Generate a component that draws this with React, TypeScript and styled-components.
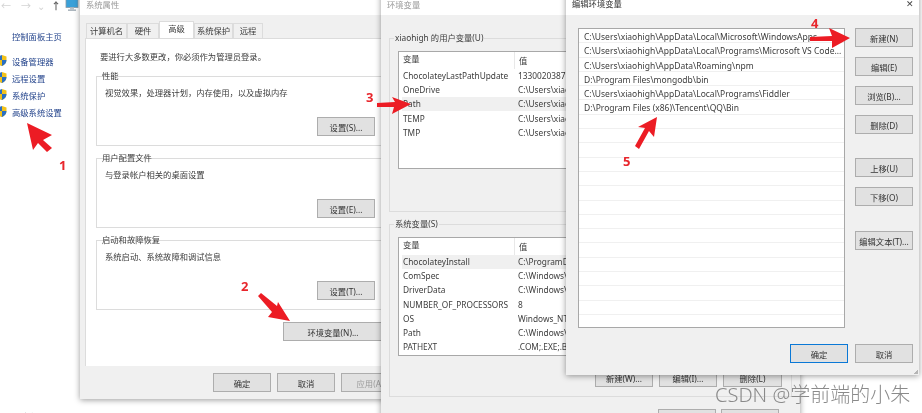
import React from 'react'
import styled, { createGlobalStyle } from 'styled-components'

const userVars = [
  ['ChocolateyLastPathUpdate', '133002038712'],
  ['OneDrive', 'C:\\Users\\xiaohigh\\OneDrive'],
  ['Path', 'C:\\Users\\xiaohigh\\AppData'],
  ['TEMP', 'C:\\Users\\xiaohigh\\AppData'],
  ['TMP', 'C:\\Users\\xiaohigh\\AppData'],
]

const systemVars = [
  ['ChocolateyInstall', 'C:\\ProgramData\\chocolatey'],
  ['ComSpec', 'C:\\Windows\\system32'],
  ['DriverData', 'C:\\Windows\\System32'],
  ['NUMBER_OF_PROCESSORS', '8'],
  ['OS', 'Windows_NT'],
  ['Path', 'C:\\Windows\\system32'],
  ['PATHEXT', '.COM;.EXE;.BAT;.CMD'],
]

const pathRows = [
  'C:\\Users\\xiaohigh\\AppData\\Local\\Microsoft\\WindowsApps',
  'C:\\Users\\xiaohigh\\AppData\\Local\\Programs\\Microsoft VS Code...',
  'C:\\Users\\xiaohigh\\AppData\\Roaming\\npm',
  'D:\\Program Files\\mongodb\\bin',
  'C:\\Users\\xiaohigh\\AppData\\Local\\Programs\\Fiddler',
  'D:\\Program Files (x86)\\Tencent\\QQ\\Bin',
  '', '', '', '', '', '', '', '', '', '', '', '', '', '', '',
]

const App = () => (
  <Desktop>
    <GlobalStyle />
    <Sidebar>
      <NavBar>
        <NavGlyph $faint $gap={0}>←</NavGlyph>
        <NavGlyph $faint $gap={10}>→</NavGlyph>
        <NavGlyph $faint $gap={5}>⌄</NavGlyph>
        <NavGlyph $gap={5}>↑</NavGlyph>
      </NavBar>
      <SideHome>控制面板主页</SideHome>
      {['设备管理器', '远程设置', '系统保护', '高级系统设置'].map(item => (
        <SideLink key={item}>
          <Shield />
          {item}
        </SideLink>
      ))}
      <SideFooter>另请参阅</SideFooter>
    </Sidebar>
    <MonitorIcon />

    <SystemWindow>
      <TitleBar>系统属性</TitleBar>
      <Tabs>
        <Tab $width={41}>计算机名</Tab>
        <Tab $width={32}>硬件</Tab>
        <Tab $width={35} $active>高级</Tab>
        <Tab $width={39}>系统保护</Tab>
        <Tab $width={30}>远程</Tab>
      </Tabs>
      <TabPage>
        <Notice>要进行大多数更改，你必须作为管理员登录。</Notice>
        <Group $height={70}>
          <GroupLabel>性能</GroupLabel>
          <GroupText>视觉效果，处理器计划，内存使用，以及虚拟内存</GroupText>
          <Button $width={58}>设置(S)...</Button>
        </Group>
        <Group $height={70}>
          <GroupLabel>用户配置文件</GroupLabel>
          <GroupText>与登录帐户相关的桌面设置</GroupText>
          <Button $width={58}>设置(E)...</Button>
        </Group>
        <Group $height={70}>
          <GroupLabel>启动和故障恢复</GroupLabel>
          <GroupText>系统启动、系统故障和调试信息</GroupText>
          <Button $width={58}>设置(T)...</Button>
        </Group>
        <EnvRow>
          <Button $width={100}>环境变量(N)...</Button>
        </EnvRow>
      </TabPage>
      <DialogButtons>
        <Button $width={58}>确定</Button>
        <Button $width={58}>取消</Button>
        <Button $width={58} $disabled>应用(A)</Button>
      </DialogButtons>
    </SystemWindow>

    <EnvWindow>
      <TitleBar>环境变量</TitleBar>
      <EnvBody>
        <EnvGroup $height={174}>
          <GroupLabel>xiaohigh 的用户变量(U)</GroupLabel>
          <VarList $height={118}>
            <VarHeader>
              <NameHead>变量</NameHead>
              <span>值</span>
            </VarHeader>
            {userVars.map(([name, value]) => (
              <VarRow key={name} $selected={name === 'Path'}>
                <VarName>{name}</VarName>
                <span>{value}</span>
              </VarRow>
            ))}
          </VarList>
        </EnvGroup>
        <EnvGroup $height={173}>
          <GroupLabel>系统变量(S)</GroupLabel>
          <VarList $height={119}>
            <VarHeader>
              <NameHead>变量</NameHead>
              <span>值</span>
            </VarHeader>
            {systemVars.map(([name, value]) => (
              <VarRow key={name} $selected={name === 'ChocolateyInstall'}>
                <VarName>{name}</VarName>
                <span>{value}</span>
              </VarRow>
            ))}
          </VarList>
          <VarButtons>
            <Button $width={58}>新建(W)...</Button>
            <Button $width={58}>编辑(I)...</Button>
            <Button $width={59}>删除(L)</Button>
          </VarButtons>
        </EnvGroup>
        <EnvFooter>
          <Button $width={58}>确定</Button>
          <Button $width={58}>取消</Button>
        </EnvFooter>
      </EnvBody>
    </EnvWindow>

    <EditWindow>
      <EditTitle>
        编辑环境变量
        <CloseMark>✕</CloseMark>
      </EditTitle>
      <EditBody>
        <EditMain>
          <PathList>
            {pathRows.map((row, i) => (
              <PathRow key={i}>{row}</PathRow>
            ))}
          </PathList>
          <SideButtons>
            <Button $width={58}>新建(N)</Button>
            <Button $width={58}>编辑(E)</Button>
            <Button $width={58}>浏览(B)...</Button>
            <Button $width={58}>删除(D)</Button>
            <ButtonGap $height={14} />
            <Button $width={58}>上移(U)</Button>
            <Button $width={58}>下移(O)</Button>
            <ButtonGap $height={15} />
            <Button $width={58}>编辑文本(T)...</Button>
          </SideButtons>
        </EditMain>
        <EditFooter>
          <Button $width={58} $primary>确定</Button>
          <Button $width={58}>取消</Button>
        </EditFooter>
      </EditBody>
      <SizeGrip />
    </EditWindow>

    <ArrowLayer viewBox="0 0 922 413">
      <polygon points="27,123 52,135 43,140 52,148 47,152 38,143 33,150" />
      <polygon points="258,296 261,293 277,306 278,302 290,321 268,317 272,312" />
      <polygon points="377,103 395,102 392,97 411,104 392,114 394,107 377,107" />
      <polygon points="810,37 832,36 829,28 850,38 832,48 832,41 810,41" />
      <polygon points="635,146 645,128 638,127 657,117 654,137 649,131 639,149" />
    </ArrowLayer>
    <StepNumber $x={59} $y={157}>1</StepNumber>
    <StepNumber $x={241} $y={278}>2</StepNumber>
    <StepNumber $x={366} $y={89}>3</StepNumber>
    <StepNumber $x={811} $y={15}>4</StepNumber>
    <StepNumber $x={623} $y={153}>5</StepNumber>
    <Watermark>CSDN @学前端的小朱</Watermark>
  </Desktop>
)

const Shield = () => (
  <ShieldSvg viewBox="0 0 10 11">
    <path d="M5 0 L9.5 1.6 V5 C9.5 8 7.5 10 5 11 Z" fill="#f2c21a" />
    <path d="M5 0 L0.5 1.6 V5 C0.5 8 2.5 10 5 11 Z" fill="#2a6fc4" />
    <path d="M0.5 5 H5 V11 C2.5 10 0.5 8 0.5 5 Z" fill="#f2c21a" />
    <path d="M5 5 H9.5 C9.5 8 7.5 10 5 11 Z" fill="#2a6fc4" />
  </ShieldSvg>
)

const MonitorIcon = () => (
  <MonitorSvg viewBox="0 0 14 14">
    <rect x="1" y="1" width="12" height="8.5" fill="#3aa0d8" stroke="#8a99a6" strokeWidth="0.8" />
    <rect x="5" y="9.5" width="4" height="2" fill="#b8c2ca" />
    <rect x="3" y="11.5" width="8" height="1.3" fill="#9aa6b0" />
  </MonitorSvg>
)

const GlobalStyle = createGlobalStyle`
  html, body {
    margin: 0;
    padding: 0;
    background: #fff;
    overflow: hidden;
  }
`

const Desktop = styled.div`
  position: relative;
  width: 922px;
  height: 413px;
  overflow: hidden;
  background: #fff;
  color: #3c3c3c;
  font-family: 'Noto Sans', 'Noto Sans CJK SC', sans-serif;
  font-size: 8.3px;
  filter: blur(0.35px);
`

const Sidebar = styled.div`
  display: flex;
  flex-direction: column;
  width: 79px;
  height: 413px;
`

const NavBar = styled.div`
  display: flex;
  align-items: center;
  height: 13px;
  padding-left: 1px;
`

const NavGlyph = styled.span<{ $faint?: boolean; $gap: number }>`
  width: 10px;
  margin-left: ${props => props.$gap}px;
  text-align: center;
  font-size: 10px;
  line-height: 13px;
  font-weight: ${props => (props.$faint ? 400 : 700)};
  color: ${props => (props.$faint ? '#d4d4d4' : '#666')};
`

const SideHome = styled.div`
  margin: 17px 0 9px 12px;
  line-height: 13px;
  color: #24448c;
`

const SideLink = styled.div`
  display: flex;
  align-items: center;
  gap: 5px;
  height: 17px;
  margin-left: -3px;
  color: #24448c;
`

const SideFooter = styled.div`
  margin: auto 0 -10px 12px;
  line-height: 13px;
  color: #555;
`

const ShieldSvg = styled.svg`
  width: 10px;
  height: 11px;
  flex: none;
`

const MonitorSvg = styled.svg`
  position: absolute;
  left: 65px;
  top: -2px;
  width: 14px;
  height: 14px;
`

const Window = styled.div`
  position: absolute;
  background: #f0f0f0;
  box-shadow: 0 1px 6px rgba(0, 0, 0, 0.4);
`

const SystemWindow = styled(Window)`
  left: 80px;
  top: -10px;
  width: 316px;
  height: 409px;
`

const EnvWindow = styled(Window)`
  left: 381px;
  top: -10px;
  width: 419px;
  height: 445px;
`

const EditWindow = styled(Window)`
  left: 566px;
  top: -10px;
  width: 353px;
  height: 385px;
`

const TitleBar = styled.div`
  height: 25px;
  padding: 8px 0 0 6px;
  box-sizing: border-box;
  background: #fff;
  line-height: 13px;
  color: #9a9a9a;
`

const EditTitle = styled(TitleBar)`
  display: flex;
  justify-content: space-between;
  padding: 7px 5px 0 6px;
  color: #333;
`

const CloseMark = styled.span`
  font-size: 9px;
  color: #444;
`

const Tabs = styled.div`
  display: flex;
  align-items: flex-end;
  height: 16px;
  margin-top: 7px;
  padding-left: 6px;
`

const Tab = styled.div<{ $active?: boolean; $width: number }>`
  width: ${props => props.$width}px;
  height: ${props => (props.$active ? 17 : 15)}px;
  box-sizing: border-box;
  border: 1px solid #dcdcdc;
  border-bottom: 0;
  background: ${props => (props.$active ? '#fff' : '#f0f0f0')};
  line-height: 14px;
  text-align: center;
  white-space: nowrap;
  position: relative;
  z-index: ${props => (props.$active ? 1 : 0)};
`

const TabPage = styled.div`
  margin-left: 5px;
  height: 328px;
  padding: 11px 13px 0 10px;
  box-sizing: border-box;
  background: #fff;
  border-top: 1px solid #dcdcdc;
  border-left: 1px solid #dcdcdc;
  display: flex;
  flex-direction: column;
`

const Notice = styled.div`
  margin-left: 4px;
  line-height: 13px;
  margin-bottom: 13px;
`

const Group = styled.div<{ $height: number }>`
  position: relative;
  height: ${props => props.$height}px;
  box-sizing: border-box;
  border: 1px solid #dcdcdc;
  padding: 9px 7px 9px 8px;
  margin-bottom: 12px;
  display: flex;
  flex-direction: column;
  align-items: flex-end;
  justify-content: space-between;
`

const GroupLabel = styled.span`
  position: absolute;
  left: 4px;
  top: -8px;
  padding: 0 1px;
  background: inherit;
  line-height: 13px;
  white-space: nowrap;
`

const GroupText = styled.div`
  align-self: flex-start;
  line-height: 13px;
`

const EnvRow = styled.div`
  display: flex;
  justify-content: flex-end;
`

const Button = styled.div<{ $width: number; $primary?: boolean; $disabled?: boolean }>`
  width: ${props => props.$width}px;
  height: 19px;
  box-sizing: border-box;
  flex: none;
  display: flex;
  align-items: center;
  justify-content: center;
  background: #e1e1e1;
  border: ${props => (props.$primary ? '1.5px solid #0a78d6' : '1px solid #adadad')};
  color: ${props => (props.$disabled ? '#9a9a9a' : '#333')};
  white-space: nowrap;
  overflow: hidden;
`

const DialogButtons = styled.div`
  display: flex;
  gap: 6px;
  margin: 7px 0 0 133px;
`

const EnvBody = styled.div`
  padding: 23px 8px 0 8px;
  display: flex;
  flex-direction: column;
`

const EnvGroup = styled.div<{ $height: number }>`
  position: relative;
  height: ${props => props.$height}px;
  box-sizing: border-box;
  flex: none;
  background: #f0f0f0;
  border: 1px solid #dcdcdc;
  padding: 12px 8px 0 8px;
  margin-bottom: 12px;
`

const VarList = styled.div<{ $height: number }>`
  height: ${props => props.$height}px;
  box-sizing: border-box;
  background: #fff;
  border: 1px solid #a8a8a8;
  padding-left: 3px;
`

const VarHeader = styled.div`
  display: flex;
  height: 16.5px;
  align-items: center;
  line-height: 13px;
`

const NameHead = styled.span`
  width: 113px;
  height: 100%;
  padding-left: 1px;
  box-sizing: border-box;
  border-right: 1px solid #e8e8e8;
  margin-right: 4px;
`

const VarRow = styled.div<{ $selected?: boolean }>`
  display: flex;
  height: 14.3px;
  align-items: center;
  line-height: 14px;
  white-space: nowrap;
  background: ${props => (props.$selected ? '#f0f0f0' : 'transparent')};
`

const VarName = styled.span`
  width: 116px;
  padding-left: 1px;
  box-sizing: border-box;
  flex: none;
`

const VarButtons = styled.div`
  display: flex;
  gap: 6px;
  justify-content: flex-end;
  margin: 12px 0 0 0;
  padding-right: 1px;
`

const EnvFooter = styled.div`
  display: flex;
  gap: 5px;
  justify-content: flex-end;
  padding-right: 13px;
`

const EditBody = styled.div`
  padding: 13px 6px 0 12px;
`

const EditMain = styled.div`
  display: flex;
  gap: 10px;
`

const PathList = styled.div`
  width: 267px;
  height: 300px;
  box-sizing: border-box;
  background: #fff;
  border: 1px solid #a8a8a8;
  overflow: hidden;
`

const PathRow = styled.div`
  height: 14.3px;
  box-sizing: border-box;
  padding-left: 5px;
  border-bottom: 1px solid #f0f0f0;
  font-size: 8.5px;
  line-height: 16px;
  white-space: nowrap;
`

const SideButtons = styled.div`
  display: flex;
  flex-direction: column;
  gap: 10px;
`

const ButtonGap = styled.div<{ $height: number }>`
  height: ${props => props.$height}px;
  margin-top: -10px;
`

const EditFooter = styled.div`
  display: flex;
  gap: 7px;
  justify-content: flex-end;
  margin-top: 16px;
`

const SizeGrip = styled.div`
  position: absolute;
  right: 1px;
  bottom: 1px;
  width: 5px;
  height: 5px;
  background: linear-gradient(135deg, transparent 55%, #b5b5b5 55%);
`

const ArrowLayer = styled.svg`
  position: absolute;
  inset: 0;
  width: 922px;
  height: 413px;
  fill: #ec1c24;
`

const StepNumber = styled.span<{ $x: number; $y: number }>`
  position: absolute;
  left: ${props => props.$x}px;
  top: ${props => props.$y}px;
  font-size: 13px;
  line-height: 16px;
  font-weight: 700;
  color: #e8262c;
`

const Watermark = styled.div`
  position: absolute;
  left: 715px;
  top: 382px;
  font-size: 20px;
  font-weight: 300;
  line-height: 26px;
  color: #8a8a8a;
  white-space: nowrap;
`

export default App
